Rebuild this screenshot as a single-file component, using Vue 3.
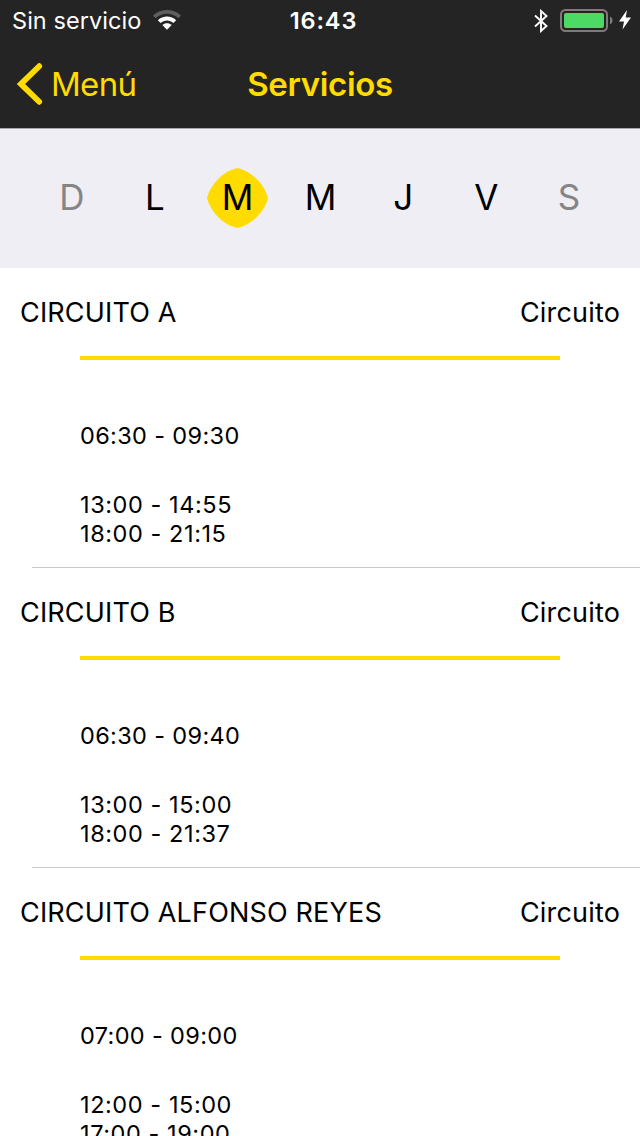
<script setup>

import { ref } from "vue";

const Days = [
  { letter: "D", weekend: true },
  { letter: "L" },
  { letter: "M" },
  { letter: "M" },
  { letter: "J" },
  { letter: "V" },
  { letter: "S", weekend: true }
];

const SelectedDay = ref(2);

const Services = [
  { name: "CIRCUITO A", type: "Circuito", morning: "06:30 - 09:30", evening: ["13:00 - 14:55", "18:00 - 21:15"] },
  { name: "CIRCUITO B", type: "Circuito", morning: "06:30 - 09:40", evening: ["13:00 - 15:00", "18:00 - 21:37"] },
  { name: "CIRCUITO ALFONSO REYES", type: "Circuito", morning: "07:00 - 09:00", evening: ["12:00 - 15:00", "17:00 - 19:00"] }
];

</script>

<template>
  <div class="screen">
    <header class="top">
      <div class="status-bar">
        <div class="status-left">
          <span class="carrier">Sin servicio</span>
          <svg class="wifi" width="28" height="20" viewBox="0 0 28 20">
            <path d="M0 5.600C7.600 -1.900 20.400 -1.900 28 5.600L25.400 8.200C19.200 2.100 8.800 2.100 2.600 8.200Z" fill="#5f5f5f" />
            <path d="M4.800 10.300C9.900 5.300 18.100 5.300 23.200 10.300L20.400 13.100C17 9.700 11 9.700 7.600 13.100Z" fill="#fff" />
            <path d="M9.300 15C12 12.600 16 12.600 18.700 15L14 19.700Z" fill="#fff" />
          </svg>
        </div>
        <span class="clock">16:43</span>
        <div class="status-right">
          <svg class="bluetooth" width="14" height="24" viewBox="0 0 14 24">
            <path d="M1 6.500L12.500 17L7 22V2L12.500 7L1 17.500" fill="none" stroke="#fff" stroke-width="1.900" />
          </svg>
          <svg class="battery" width="53" height="24" viewBox="0 0 53 24">
            <rect x="1" y="1" width="46" height="21" rx="4.500" fill="none" stroke="#7c7c7c" stroke-width="2" />
            <rect x="4" y="4" width="40" height="15" rx="2" fill="#4cd964" />
            <path d="M50 7.500C53.400 9 53.400 14 50 15.500Z" fill="#7c7c7c" />
          </svg>
          <svg class="bolt" width="12" height="20" viewBox="0 0 12 20">
            <path d="M8 0L0 11.500H5L3.500 19.500L12 7.500H6.700Z" fill="#fff" />
          </svg>
        </div>
      </div>
      <nav class="nav-bar">
        <a class="back">
          <svg width="26" height="42" viewBox="0 0 26 42">
            <path d="M22.200 3.200L4 21L22.200 38.800" fill="none" stroke="#ffdb00" stroke-width="5.800" stroke-linecap="round" />
          </svg>
          <span class="back-label">Menú</span>
        </a>
        <h1 class="title">Servicios</h1>
      </nav>
    </header>

    <div class="days">
      <div
        v-for="(day, index) in Days"
        :key="index"
        :class="{ 'weekend' : day.weekend, 'selected' : index === SelectedDay }"
        class="day"
        @click="SelectedDay = index"
      >
        <svg v-if="index === SelectedDay" class="marker" width="61" height="60" viewBox="0 0 61 60">
          <path d="M30.500 0C44 3 57 15 61 30C57 45 44 57 30.500 60C17 57 4 45 0 30C4 15 17 3 30.500 0Z" fill="#ffdb00" />
        </svg>
        <span class="letter">{{day.letter}}</span>
      </div>
    </div>

    <main class="list">
      <section v-for="service in Services" :key="service.name" class="service">
        <div class="service-head">
          <span class="name">{{service.name}}</span>
          <span class="type">{{service.type}}</span>
        </div>
        <div class="rule"></div>
        <div class="hours morning">{{service.morning}}</div>
        <div class="hours evening">
          <div v-for="range in service.evening" :key="range">{{range}}</div>
        </div>
        <div class="separator"></div>
      </section>
    </main>
  </div>
</template>

<style>
body {
  margin: 0;
  background: #fff;
}
</style>

<style scoped>

.screen {
  width: 640px;
  height: 1136px;
  overflow: hidden;
  background: #fff;
  color: #000;
  font-family: Inter, "Liberation Sans", sans-serif;
}

.top {
  box-sizing: border-box;
  height: 129px;
  background: #242424;
  border-bottom: 1px solid #a9a8ab;
}

.status-bar {
  display: grid;
  grid-template-columns: 1fr auto 1fr;
  align-items: center;
  height: 41px;
  color: #fff;
  font-size: 23.500px;
}

.status-left,
.status-right {
  display: flex;
  align-items: center;
}

.status-left {
  padding-left: 12px;
}

.carrier {
  letter-spacing: .05px;
  line-height: 41px;
}

.wifi {
  margin: -1px 0 0 12px;
}

.clock {
  padding-left: 7px;
  font-weight: 600;
  line-height: 41px;
  letter-spacing: .9px;
}

.status-right {
  justify-content: flex-end;
  padding-right: 9px;
}

.battery {
  margin-left: 12px;
}

.bolt {
  margin: -1px 0 0 6px;
}

.nav-bar {
  display: grid;
  grid-template-columns: 1fr auto 1fr;
  align-items: center;
  height: 86px;
  color: #ffdb00;
}

.back {
  display: flex;
  align-items: center;
  padding-left: 17px;
}

.back-label {
  margin-left: 8px;
  font-size: 33px;
  letter-spacing: -.7px;
}

.title {
  margin: 0;
  font-size: 33px;
  font-weight: 600;
  letter-spacing: -.35px;
}

.days {
  display: grid;
  grid-template-columns: repeat(7, 1fr);
  height: 139px;
  padding: 0 30px;
  box-sizing: border-box;
  background: #efeef4;
}

.day {
  display: flex;
  align-items: center;
  justify-content: center;
  position: relative;
  box-sizing: border-box;
  height: 136px;
  padding-left: 1px;
  font-size: 35px;
  cursor: pointer;
}

.weekend {
  color: #858585;
}

.marker {
  position: absolute;
  left: 11px;
  top: 39px;
}

.letter {
  position: relative;
}

.service {
  display: flex;
  flex-direction: column;
  height: 300px;
}

.service-head {
  display: flex;
  align-items: center;
  justify-content: space-between;
  height: 88px;
  padding: 0 20px;
  font-size: 27px;
  letter-spacing: .17px;
}

.rule {
  height: 4px;
  margin: 0 80px;
  background: #ffdb00;
}

.hours {
  padding-left: 80px;
  font-size: 23.500px;
  line-height: 29px;
  font-feature-settings: "calt" 0;
}

.morning {
  margin-top: 61px;
  letter-spacing: .35px;
}

.evening {
  margin-top: 40px;
  letter-spacing: .57px;
}

.separator {
  height: 1px;
  margin: auto 0 0 32px;
  background: #c8c7cc;
}

</style>
